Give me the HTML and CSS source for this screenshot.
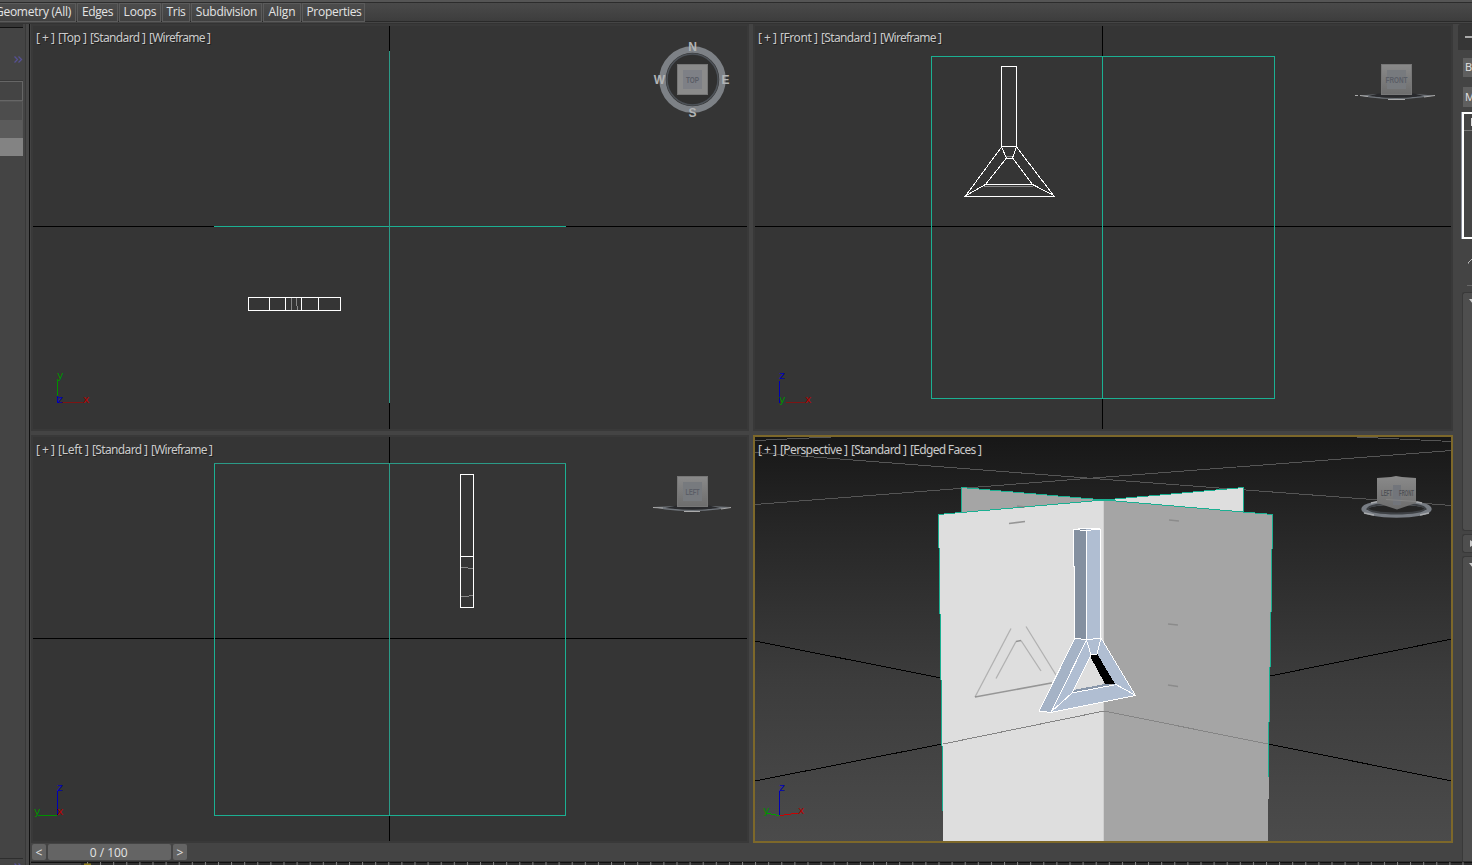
FILE: index.html
```html
<!DOCTYPE html>
<html lang="en">
<head>
<meta charset="utf-8">
<title>Viewports</title>
<link rel="stylesheet" href="styles.css">
</head>
<body>
<div class="app">
  <header class="ribbon">
    <div class="tab tab-geometry"><span>Geometry (All)</span></div>
    <div class="tab tab-edges"><span>Edges</span></div>
    <div class="tab tab-loops"><span>Loops</span></div>
    <div class="tab tab-tris"><span>Tris</span></div>
    <div class="tab tab-subdivision"><span>Subdivision</span></div>
    <div class="tab tab-align"><span>Align</span></div>
    <div class="tab tab-properties"><span>Properties</span></div>
  </header>

  <aside class="left">
    <div class="left-body">
      <div class="left-head"><svg width="9" height="7" class="chev"><path d="M.5 .5l3 3-3 3M4.500 .5l3 3-3 3"/></svg></div>
      <div class="cell cell-box"></div>
      <div class="cell cell-a"></div>
      <div class="cell cell-b"></div>
      <div class="cell cell-c"></div>
      <div class="left-rest"></div>
      <div class="left-foot"><svg width="9" height="7" class="chev"><path d="M.5 .5l3 3-3 3M4.500 .5l3 3-3 3"/></svg></div>
    </div>
  </aside>

  <main class="views">
    <svg class="view" viewBox="31 24 718 407">
      <g class="crisp">
        <path class="axis" d="M33 226.5H747M389.5 26V429"/>
        <path class="teal" d="M214 226.5H566"/><path class="teal soft" d="M389.5 51V403"/>
        <path class="white" d="M248.5 297.5H340.5V310.5H248.5ZM269.5 297V310M285.5 297V310M301.5 297V310M318.5 298V310"/>
        <path class="grey" d="M291.5 298V310M296.5 298V306M297.5 306V310"/>
        <path class="zl" d="M57.5 379V403"/><path class="xl dark" d="M58 402.500H83"/>
        <path class="gl" d="M57.5 379V396"/>
      </g>
      <text class="ax g" x="57" y="379">y</text><text class="ax b" x="57" y="403">z</text><text class="ax r" x="83" y="403">x</text>
      <g class="label"><text x="36" y="42" textLength="19">[+]</text><text x="58" y="42" textLength="29">[Top ]</text><text x="90" y="42" textLength="56">[Standard ]</text><text x="149" y="42" textLength="62">[Wireframe ]</text></g>
      <circle cx="692.500" cy="79.500" r="25" fill="#303030"/>
      <circle cx="692.500" cy="79.500" r="30" fill="none" stroke="#7d8186" stroke-width="6.500"/>
      <circle cx="692.500" cy="79.500" r="25.500" fill="none" stroke="#4d5258" stroke-width="1.500"/>
      <rect x="677.5" y="64.500" width="30" height="30" fill="#8b8b8b" stroke="#777"/>
      <rect x="683" y="70" width="19" height="19" fill="#7e8086"/>
      <text class="cube" x="686" y="82.500" textLength="13" lengthAdjust="spacingAndGlyphs">TOP</text>
      <g class="compass"><text x="692.500" y="51">N</text><text x="692.500" y="117">S</text><text x="659.500" y="84">W</text><text x="725.500" y="84">E</text></g>
    </svg>

    <svg class="view" viewBox="753 24 700 407">
      <g class="crisp">
        <path class="axis" d="M755 226.5H1451M1102.5 26V429"/>
        <path class="teal" d="M931.5 56.5H1274.5V398.5H931.5ZM1102.5 56V398"/>
        <path class="grey" d="M1006 156.5H1012M984 186.5H1033"/>
        <path class="white" d="M1001.5 66.5H1016.5V146.5H1001.5ZM1001.5 147L965.5 196H1054L1016.5 147M1001.5 147L1006.500 158H1012.500L1016.500 147M1006.500 158L985.500 184.500H1032.500L1012.500 158M985.500 184.500L966 195.500M1032.500 184.500L1054 195.500"/>
        <path class="zl" d="M779.5 381V403"/><path class="xl dark" d="M786 402.5H805"/>
      </g>
      <text class="ax b" x="779" y="379">z</text><text class="ax g" x="779" y="403">y</text><text class="ax r" x="805" y="403">x</text>
      <g class="label"><text x="758" y="42" textLength="19">[+]</text><text x="780" y="42" textLength="38">[Front ]</text><text x="821" y="42" textLength="56">[Standard ]</text><text x="880" y="42" textLength="62">[Wireframe ]</text></g>
      <path d="M1360 95.500L1378 94L1375 96.500Q1396 99.500 1417 96.500L1414 94L1435 95.500L1421 97.500Q1396 100.500 1370 97.500Z" fill="#70757b"/>
      <path d="M1368 96Q1396 99 1424 96L1414 93.500H1379Z" fill="#292a2d"/>
      <path d="M1355 95.500H1358M1360 95.500L1368 96.500M1435 95.500L1424 97M1388 99.500H1405" stroke="#aaa" fill="none"/>
      <rect x="1381.5" y="64.500" width="30" height="30" fill="url(#cubeShade)" stroke="#777"/>
      <rect x="1387" y="70" width="19" height="19" fill="#777a7e"/>
      <text class="cube" x="1385.500" y="82.500" textLength="22" lengthAdjust="spacingAndGlyphs">FRONT</text>
    </svg>

    <svg class="view" viewBox="31 435 718 408">
      <defs><linearGradient id="cubeShade" x2="0" y2="1"><stop stop-color="#8a8a8a"/><stop offset="1" stop-color="#6d6d6d"/></linearGradient></defs>
      <g class="crisp">
        <path class="axis" d="M33 638.5H747M389.5 437V841"/>
        <path class="teal" d="M214.5 463.5H565.5V815.5H214.5Z"/><path class="teal soft" d="M389.5 464V815M214 463.500H566"/>
        <path class="grey" d="M461 567.5H468M468 568.5H473M461 596.5H469M469 595.5H473"/>
        <path class="white" d="M460.5 474.5H473.5V607.5H460.5ZM460 556.5H474"/>
        <path class="zl" d="M57.5 791V815"/><path class="gl" d="M38 815.5H57"/>
      </g>
      <text class="ax b" x="57" y="791">z</text><text class="ax g" x="34" y="815">y</text><text class="ax r" x="57" y="815">x</text>
      <g class="label"><text x="36" y="454" textLength="19">[+]</text><text x="58" y="454" textLength="31">[Left ]</text><text x="92" y="454" textLength="56">[Standard ]</text><text x="151" y="454" textLength="62">[Wireframe ]</text></g>
      <path d="M653 507L678 506L674 508.500Q692 511 712 508.500L709 506L731 507L718 509.500Q692 512.500 665 509.500Z" fill="#70757b"/>
      <path d="M665 508Q692 511 720 508L709 505.500H677Z" fill="#292a2d"/>
      <path d="M653 507.500L663 508M731 507.500L721 509M684 511.500H700" stroke="#aaa" fill="none"/>
      <rect x="677.5" y="476.500" width="30" height="30" fill="url(#cubeShade)" stroke="#777"/>
      <rect x="683" y="482" width="19" height="19" fill="#777a7e"/>
      <text class="cube" x="685.500" y="495" textLength="14" lengthAdjust="spacingAndGlyphs">LEFT</text>
    </svg>

    <svg class="view" viewBox="753 435 700 408">
      <defs>
        <linearGradient id="sky" x2="0" y2="1"><stop stop-color="#171717"/><stop offset=".22" stop-color="#262626"/><stop offset=".6" stop-color="#3c3c3c"/><stop offset="1" stop-color="#4b4b4b"/></linearGradient>
        <filter id="soft"><feGaussianBlur stdDeviation=".5"/></filter>
      </defs>
      <rect x="753" y="435" width="700" height="408" fill="url(#sky)"/>
      <g class="crisp">
        <path class="horizon" d="M755 440.500L831 437M755 452.500L1093 478.500L1452 505.500M755 504.500L1093 478L1452 450.500M1357 437L1452 441.500"/>
        <path class="axis" d="M755 641L941 678M755 781L942 744M1452 639L1270 676M1452 781L1268 744"/>
        <path d="M961 487L1104 500L961 514Z" fill="#a5a5a5"/>
        <path d="M1243 488L1104 500L1243 513Z" fill="#dedede"/>
        <path class="teal" d="M1104 500L961.5 487.500V513M1104 500L1243.500 487.500V512"/>
        <path d="M938 514L1104 500V841H943Z" fill="#dedede"/>
        <path d="M1104 500L1272 514.500L1268 841H1104Z" fill="#a5a5a5"/>
        <path d="M1103.500 501V841" stroke="#cfcfcf"/>
        <path class="teal" d="M943 811L938.500 514.500L1104 500L1272.500 514.500L1271.500 585L1268 778"/>
        <path class="shade" d="M943 744L1104 711L1268 744"/>
      </g>
      <g class="marks" filter="url(#soft)">
        <path d="M1009 523.500L1025 521.500M1017 506L1025 507M1169 520L1179 521M1168 624L1178 625M1168 685L1178 686.500M975 697L1054 682.500M1016 641.500L1021 640.500"/>
        <path class="faint" d="M1011 628.500L975 697M996 678.500L1016 641.500M1021 640.500L1041 671M1026 626.500L1056 675"/>
      </g>
      <g class="crisp">
        <path d="M1074 530L1086 529V639H1075Z" fill="#8490a0"/><path d="M1086 529.500L1100 528.500V638L1087 640Z" fill="#b0bed2"/>
        <path d="M1075 638L1086.500 639.500L1051 712L1039 710.500Z" fill="#a5b3c6"/>
        <path fill-rule="evenodd" d="M1086.500 639.500L1101 637.500L1135 695.500L1051 712ZM1091 655L1072 693L1114 684L1097 654Z" fill="#b0bed2"/>
        <path d="M1090 656L1097 653.500L1115 684L1105 684Z" fill="#000"/>
        <path d="M1073 690L1105 684L1113 685L1072 692.500Z" fill="#8997aa"/>
        <path class="white" d="M1074 529.500L1087 528L1100 529V638L1086.500 640L1075 638L1073.500 529.500L1086 530.500L1100 529M1086 530V605L1086.500 640M1075 638L1039 711L1051 712.500L1135.500 695.500L1101 638M1086.500 640L1051 712.500M1086.500 640L1091 655L1072 693L1051 712M1101 638L1097 654L1091 655M1115 684L1135 695M1114 685L1072 693"/>
        <path class="zl" d="M779.5 791V815"/><path class="gl bright" d="M766 813L779 815.500"/><path class="xl bright" d="M780 815.500L798 813"/>
      </g>
      <text class="ax b" x="779" y="791">z</text><text class="ax g" x="763" y="814">y</text><text class="ax r" x="798" y="814">x</text>
      <g class="label"><text x="758" y="454" textLength="19">[+]</text><text x="780" y="454" textLength="68">[Perspective ]</text><text x="851" y="454" textLength="56">[Standard ]</text><text x="910" y="454" textLength="72">[Edged Faces ]</text></g>
      <ellipse cx="1396.500" cy="509" rx="33" ry="6.500" fill="#252525" stroke="#777c83" stroke-width="4.500"/>
      <ellipse cx="1396.500" cy="508.500" rx="28.500" ry="5" fill="none" stroke="#3d4044" stroke-width="2"/>
      <path d="M1364 513L1374 515M1429 513L1420 515M1371 503L1378 501.500M1415 501.500L1422 503" stroke="#a9abad" stroke-width="1.500" fill="none"/>
      <path d="M1377 478L1391 477L1396 476L1402 477L1416 478V503L1397 509.500L1377 503Z" fill="url(#cubeShade)"/>
      <path d="M1393 485H1401V505H1393Z" fill="#72757b"/>
      <path d="M1386 499.500L1417 501.500" stroke="#858585" fill="none"/>
      <text class="cube dim" x="1381" y="496" textLength="11" lengthAdjust="spacingAndGlyphs">LEFT</text><text class="cube dim" x="1399" y="496" textLength="15" lengthAdjust="spacingAndGlyphs">FRONT</text>
      <rect x="754" y="436" width="698" height="406" fill="none" stroke="#7d682a" stroke-width="2"/>
    </svg>
  </main>

  <aside class="right">
    <div class="right-head"><i></i></div>
    <div class="field"><span>B</span></div>
    <div class="field second"><span>M</span></div>
    <div class="list"><div class="list-row"><i></i></div></div>
    <div class="tool"><svg width="9" height="12"><path d="M1 10L7 4M5 4h4M2 10h-1" stroke="#bbb" fill="none"/></svg></div>
    <div class="roll roll-tall"><svg width="6" height="5"><path d="M0 0h9L4 5z"/></svg></div>
    <div class="roll roll-short"><svg width="5" height="7"><path d="M1 0l6 3.500-6 3.500z"/></svg></div>
    <div class="roll roll-last"><svg width="6" height="5"><path d="M0 0h9L4 5z"/></svg></div>
  </aside>

  <footer class="time">
    <div class="slider"><div class="step"><span>&lt;</span></div><div class="thumb"><span>0 / 100</span></div><div class="step"><span>&gt;</span></div></div>
    <svg class="track" width="1441" height="4" viewBox="31 861 1441 4">
      <defs><pattern id="ticks" x="87" y="861" width="13.1" height="4" patternUnits="userSpaceOnUse"><path d="M.5 1V4" stroke="#858585"/></pattern></defs>
      <rect x="31" y="861" width="1441" height="4" fill="#303030"/><rect x="31" y="863" width="50" height="2" fill="#444"/>
      <path d="M31 862.500H1472" stroke="#111"/>
      <rect x="87" y="861" width="1385" height="4" fill="url(#ticks)"/>
      <rect x="84" y="863.500" width="7" height="2" fill="#8d7b19"/>
    </svg>
  </footer>
</div>
</body>
</html>
```
FILE: styles.css
```css
* { box-sizing: border-box; }
body { margin: 0; background: #444; overflow: hidden; }
.app {
  width: 1472px; height: 865px; display: grid;
  grid-template: 24px 819px 22px / 31px 1422px 19px;
  font-family: "Open Sans", "Noto Sans", sans-serif; font-size: 12px; color: #e4e4e4;
}
.ribbon {
  grid-column: 1 / 4; display: flex; gap: 1px; padding-top: 1px; height: 24px;
  background: linear-gradient(#555 0 2px, #2c2c2c 2px 3px, #4a4a4a 3px, #3d3d3d 21px, #292929 21px 22px, #454545 22px 23px, #333 23px);
}
.tab {
  height: 19px; margin-top: 2px; display: flex; align-items: center; justify-content: center;
  border: 1px solid #5b5b5b; background: linear-gradient(#4c4c4c, #414141); white-space: nowrap; line-height: 17px; padding-bottom: 2px;
}
.tab-geometry { width: 76px; justify-content: flex-end; padding-right: 4px; border-left: 0; letter-spacing: -.25px; }
.tab-edges { width: 41px; letter-spacing: -.35px; }
.tab-loops { width: 42px; letter-spacing: -.2px; }
.tab-tris { width: 28px; letter-spacing: -.3px; }
.tab-subdivision { width: 71px; letter-spacing: -.25px; }
.tab-align { width: 38px; letter-spacing: -.1px; }
.tab-properties { width: 63px; letter-spacing: -.3px; padding-left: 1px; }
.left { grid-row: 2 / 4; background: #444; border-right: 1px solid #444; }
.left-body { height: 841px; display: flex; flex-direction: column; border-right: 1px solid #111; padding-right: 6px; background: linear-gradient(90deg, #444 25px, #383838 25px 26px, #484848 26px); }
.left-head { height: 57px; border-top: 3px solid #363636; box-shadow: inset 0 1px #111; padding: 29px 0 0 14px; border-bottom: 1px solid #393939; }
.chev { display: block; fill: none; stroke: #555093; stroke-width: 1.3; }
.cell { width: 23px; height: 18px; border-right: 1px solid #595959; }
.cell-box { height: 20px; border: 1px solid #666; border-left: 0; }
.cell-a { height: 19px; background: #4d4d4d; border-top: 1px solid #555; }
.cell-b { background: #5b5b5b; }
.cell-c { background: #838383; border-right-color: #838383; }
.left-rest { flex: 1; }
.left-foot { height: 7px; border-top: 1px solid #2e2e2e; padding: 4px 0 0 14px; overflow: hidden; }
.views { display: grid; grid-template: 407px 408px / 718px 700px; gap: 4px; background: #444; }
.view { display: block; width: 100%; height: 100%; background: #353535; }
.view:nth-child(-n+3) { box-shadow: inset 0 0 0 2px #393939; }
.crisp { shape-rendering: crispEdges; }
.crisp path[class] { fill: none; }
.axis { stroke: #000; }
.teal { stroke: #1bb092; }
.soft { stroke: #2b9a87; }
.white { stroke: #fff; }
.grey { stroke: #888; }
.horizon { stroke: #555; }
.shade { stroke: #858585; }
.marks { fill: none; stroke: #858585; stroke-opacity: .8; stroke-width: 1.6; }
.faint { stroke-opacity: .5; stroke-width: 1.3; }
.zl { stroke: #0000b5; }
.xl { stroke: #b50000; }
.xl.dark { stroke: #7d1414; }
.xl.bright { stroke: #cc0000; }
.gl { stroke: #009000; }
.gl.bright { stroke: #00a000; }
.ax { font: 11px "DejaVu Sans", sans-serif; }
.r { fill: #b50000; }
.g { fill: #009000; }
.b { fill: #0000b5; }
.label { font: 12px "Noto Sans", sans-serif; fill: #cbcbcb; }
.label text { white-space: pre; text-shadow: 1px 1px #222; }
.cube { font: bold 9px "Liberation Sans", sans-serif; fill: #5b5e66; }
.dim { fill: #505256; }
.compass { font: bold 12px "Liberation Sans", sans-serif; fill: #b2b4b5; text-anchor: middle; }
.right { overflow: hidden; padding-left: 5px; background: #444; display: flex; flex-direction: column; grid-row: 2 / 4; grid-column: 3; }
.right-head { height: 26px; background: #363636; border-radius: 3px 0 0; padding: 12px 0 0 7px; flex-shrink: 0; }
.right-head i { display: block; height: 2px; background: #aaa; }
.field { margin: 8px 0 0 5px; height: 19px; background: #5f5f5f; line-height: 17px; padding-left: 2px; font-size: 11px; flex-shrink: 0; }
.second { margin-top: 10px; height: 20px; line-height: 19px; }
.list { height: 127px; margin: 5px 0 0 4px; border: 2px solid #fff; border-right: 0; border-color: #fff; box-shadow: -1px 0 #8b8f9c; flex-shrink: 0; }
.list-row { height: 17px; border-bottom: 1px solid #777; padding: 4px 0 0 7px; }
.list-row i { display: block; height: 8px; background: #ddd; }
.tool { margin: 14px 0 0 9px; height: 33px; border-bottom: 1px solid #666; flex-shrink: 0; }
.tool svg { display: block; }
.roll { margin-left: 4px; background: #4e4e4e; border: 1px solid #393939; border-right: 0; border-radius: 3px 0 0 3px; padding-left: 6px; fill: #ccc; flex-shrink: 0; margin-bottom: 3px; }
.roll svg { display: block; }
.roll-tall { height: 239px; margin-top: 6px; padding-top: 6px; }
.roll-short { height: 19px; padding-top: 5px; }
.roll-last { height: 312px; padding-top: 6px; }
.time { grid-column: 2; grid-row: 3; }
.slider { display: flex; gap: 2px; padding: 1px 0 0 1px; height: 18px; }
.slider > div { height: 16px; background: #646464; border-radius: 2px; line-height: 17px; text-align: center; }
.slider .step { width: 14px; }
.slider .thumb { width: 123px; padding-right: 2px; word-spacing: .5px; letter-spacing: -.2px; }
.track { display: block; }
```
